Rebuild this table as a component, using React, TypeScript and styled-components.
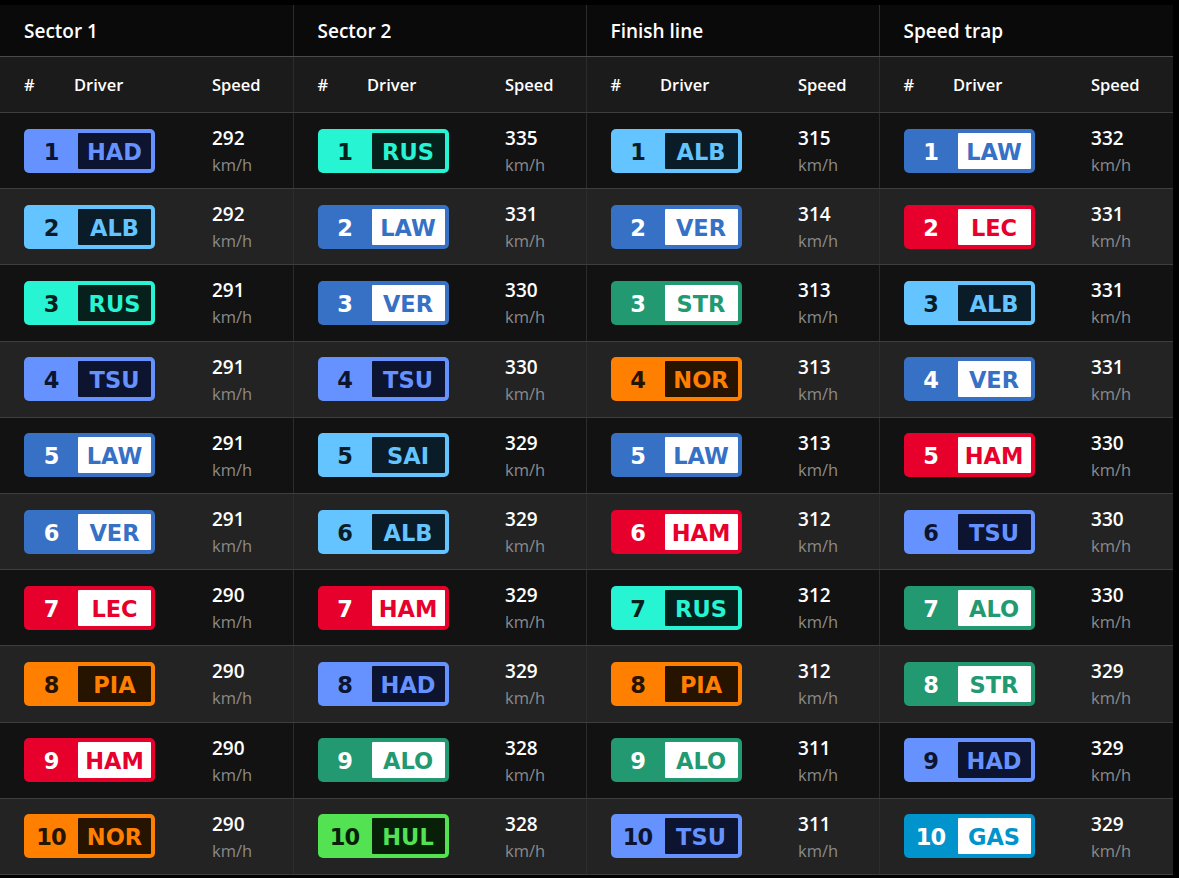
import React from 'react'
import styled, { createGlobalStyle } from 'styled-components'

type Team = { color: string; inner: string; ink: string }

const TEAMS: { [key: string]: Team } = {
  rb: { color: '#6692ff', inner: '#0c1430', ink: '#0c1430' },
  williams: { color: '#64c4ff', inner: '#0a1c28', ink: '#0a1c28' },
  mercedes: { color: '#27f4d2', inner: '#06201c', ink: '#06201c' },
  mclaren: { color: '#ff8000', inner: '#261300', ink: '#261300' },
  sauber: { color: '#52e252', inner: '#082008', ink: '#082008' },
  redbull: { color: '#3671c6', inner: '#ffffff', ink: '#ffffff' },
  ferrari: { color: '#e8002d', inner: '#ffffff', ink: '#ffffff' },
  aston: { color: '#229971', inner: '#ffffff', ink: '#ffffff' },
  alpine: { color: '#0093cc', inner: '#ffffff', ink: '#ffffff' },
}

const DRIVER_TEAM: { [key: string]: string } = {
  HAD: 'rb', TSU: 'rb',
  ALB: 'williams', SAI: 'williams',
  RUS: 'mercedes',
  NOR: 'mclaren', PIA: 'mclaren',
  HUL: 'sauber',
  LAW: 'redbull', VER: 'redbull',
  LEC: 'ferrari', HAM: 'ferrari',
  ALO: 'aston', STR: 'aston',
  GAS: 'alpine',
}

type Entry = [string, number]

const GROUPS: { title: string; rows: Entry[] }[] = [
  {
    title: 'Sector 1',
    rows: [['HAD', 292], ['ALB', 292], ['RUS', 291], ['TSU', 291], ['LAW', 291], ['VER', 291], ['LEC', 290], ['PIA', 290], ['HAM', 290], ['NOR', 290]],
  },
  {
    title: 'Sector 2',
    rows: [['RUS', 335], ['LAW', 331], ['VER', 330], ['TSU', 330], ['SAI', 329], ['ALB', 329], ['HAM', 329], ['HAD', 329], ['ALO', 328], ['HUL', 328]],
  },
  {
    title: 'Finish line',
    rows: [['ALB', 315], ['VER', 314], ['STR', 313], ['NOR', 313], ['LAW', 313], ['HAM', 312], ['RUS', 312], ['PIA', 312], ['ALO', 311], ['TSU', 311]],
  },
  {
    title: 'Speed trap',
    rows: [['LAW', 332], ['LEC', 331], ['ALB', 331], ['VER', 331], ['HAM', 330], ['TSU', 330], ['ALO', 330], ['STR', 329], ['HAD', 329], ['GAS', 329]],
  },
]

const GlobalStyle = createGlobalStyle`
  html, body {
    margin: 0;
    padding: 0;
    background: #000;
  }
  body {
    font-family: "Open Sans", "Noto Sans", "Liberation Sans", sans-serif;
    color: #fff;
  }
`

const Page = styled.div`
  padding-top: 5px;
  background: #000;
  min-height: 873px;
`

const Table = styled.table`
  width: 1173px;
  table-layout: fixed;
  border-collapse: collapse;
  background: #121212;
`

const TitleCell = styled.th<{ $first?: boolean }>`
  height: 51px;
  padding: 0 0 0 24px;
  text-align: left;
  font-size: 19px;
  font-weight: 600;
  background: #0a0a0a;
  border-left: ${p => (p.$first ? 'none' : '1px solid #2c2c2c')};
  border-bottom: 1px solid #4a4a4a;
`

const SubHeadCell = styled.th<{ $divider?: boolean }>`
  height: 55px;
  padding: 0 0 0 24px;
  text-align: left;
  font-size: 16.5px;
  font-weight: 600;
  background: #1b1b1b;
  border-left: ${p => (p.$divider ? '1px solid #2c2c2c' : 'none')};
  border-bottom: 1px solid #3e3e3e;
`

const Row = styled.tr<{ $alt: boolean }>`
  background: ${p => (p.$alt ? '#232323' : '#121212')};
`

const Cell = styled.td<{ $divider?: boolean }>`
  height: 75.2px;
  padding: 0 0 0 24px;
  vertical-align: middle;
  border-left: ${p => (p.$divider ? '1px solid #2c2c2c' : 'none')};
  border-bottom: 1px solid #3e3e3e;
`

const Badge = styled.div<{ $team: Team }>`
  display: inline-flex;
  box-sizing: border-box;
  width: 131px;
  height: 44px;
  padding: 4px 4px 4px 0;
  border-radius: 5px;
  background: ${p => p.$team.color};
  font-family: "DejaVu Sans", "Liberation Sans", sans-serif;
  font-weight: 700;
  font-size: 22.5px;
  vertical-align: middle;
`

const BadgeNumber = styled.span<{ $team: Team }>`
  width: 54px;
  display: flex;
  align-items: center;
  justify-content: center;
  padding-top: 2px;
  color: ${p => p.$team.ink};
  letter-spacing: -1px;
`

const BadgeCode = styled.span<{ $team: Team }>`
  flex: 1;
  display: flex;
  align-items: center;
  justify-content: center;
  padding-top: 2px;
  background: ${p => p.$team.inner};
  color: ${p => p.$team.color};
  border-radius: 1px;
`

const SpeedBox = styled.div`
  display: flex;
  flex-direction: column;
  margin-top: 3px;
`

const SpeedValue = styled.span`
  font-size: 19px;
  font-weight: 600;
  line-height: 26px;
  color: #fff;
`

const SpeedUnit = styled.span`
  font-size: 16.5px;
  line-height: 28px;
  color: #8a8a8a;
`

const DriverBadge = ({ pos, code }: { pos: number; code: string }) => {
  const team = TEAMS[DRIVER_TEAM[code]]
  return (
    <Badge $team={team}>
      <BadgeNumber $team={team}>{pos}</BadgeNumber>
      <BadgeCode $team={team}>{code}</BadgeCode>
    </Badge>
  )
}

export default function App() {
  return (
    <Page>
      <GlobalStyle />
      <Table>
        <colgroup>
          {GROUPS.map((g, i) => (
            <React.Fragment key={g.title}>
              <col style={{ width: 50 }} />
              <col style={{ width: 138 }} />
              <col style={{ width: i === 3 ? 106 : 105 }} />
            </React.Fragment>
          ))}
        </colgroup>
        <thead>
          <tr>
            {GROUPS.map((g, i) => (
              <TitleCell key={g.title} colSpan={3} $first={i === 0}>{g.title}</TitleCell>
            ))}
          </tr>
          <tr>
            {GROUPS.map((g, i) => (
              <React.Fragment key={g.title}>
                <SubHeadCell $divider={i > 0}>#</SubHeadCell>
                <SubHeadCell>Driver</SubHeadCell>
                <SubHeadCell>Speed</SubHeadCell>
              </React.Fragment>
            ))}
          </tr>
        </thead>
        <tbody>
          {Array.from({ length: 10 }).map((_, r) => (
            <Row key={r} $alt={r % 2 === 1}>
              {GROUPS.map((g, i) => {
                const [code, speed] = g.rows[r]
                return (
                  <React.Fragment key={g.title}>
                    <Cell colSpan={2} $divider={i > 0}>
                      <DriverBadge pos={r + 1} code={code} />
                    </Cell>
                    <Cell>
                      <SpeedBox>
                        <SpeedValue>{speed}</SpeedValue>
                        <SpeedUnit>km/h</SpeedUnit>
                      </SpeedBox>
                    </Cell>
                  </React.Fragment>
                )
              })}
            </Row>
          ))}
        </tbody>
      </Table>
    </Page>
  )
}
